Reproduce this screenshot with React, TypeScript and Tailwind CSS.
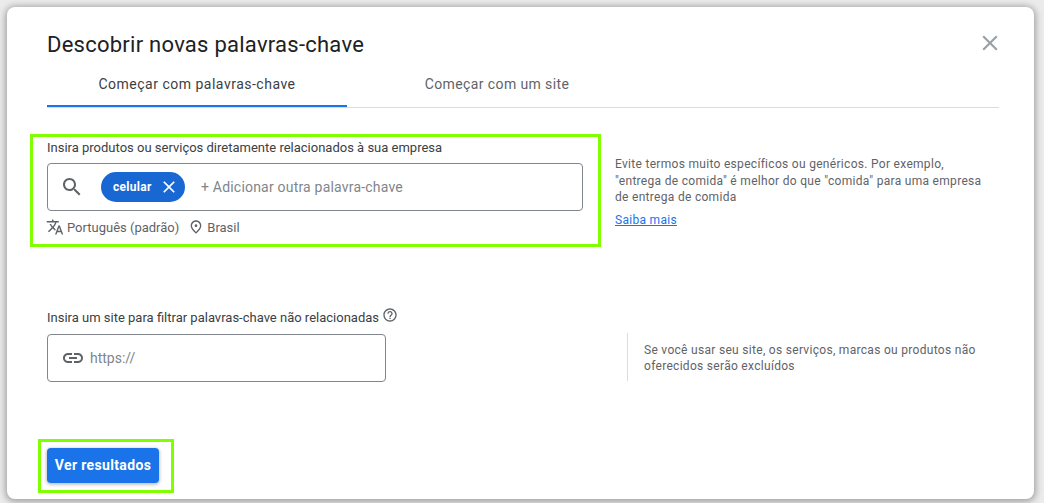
const sans = "font-['Roboto','Liberation_Sans',sans-serif]";

const paths = {
  search:
    "M15.5 14h-.79l-.28-.27C15.41 12.59 16 11.11 16 9.5 16 5.91 13.09 3 9.5 3S3 5.91 3 9.5 5.91 16 9.5 16c1.61 0 3.09-.59 4.23-1.57l.27.28v.79l5 4.99L20.49 19l-4.99-5zm-6 0C7.01 14 5 11.99 5 9.5S7.01 5 9.5 5 14 7.01 14 9.5 11.99 14 9.5 14z",
  close:
    "M19 6.41L17.59 5 12 10.59 6.41 5 5 6.41 10.59 12 5 17.59 6.41 19 12 13.41 17.59 19 19 17.59 13.41 12z",
  link: "M3.9 12c0-1.71 1.39-3.1 3.1-3.1h4V7H7c-2.76 0-5 2.24-5 5s2.24 5 5 5h4v-1.9H7c-1.71 0-3.1-1.39-3.1-3.1zM8 13h8v-2H8v2zm9-6h-4v1.9h4c1.71 0 3.1 1.39 3.1 3.1s-1.39 3.1-3.1 3.1h-4V17h4c2.76 0 5-2.24 5-5s-2.24-5-5-5z",
  translate:
    "M12.87 15.07l-2.54-2.51.03-.03c1.74-1.94 2.98-4.17 3.71-6.53H17V4h-7V2H8v2H1v1.99h11.17C11.5 7.92 10.44 9.75 9 11.35 8.07 10.32 7.3 9.19 6.69 8h-2c.73 1.63 1.73 3.17 2.98 4.56l-5.09 5.02L4 19l5-5 3.11 3.11.76-2.04zM18.5 10h-2L12 22h2l1.12-3h4.75L21 22h2l-4.5-12zm-2.62 7l1.62-4.33L19.12 17h-3.24z",
  place:
    "M12 12c-1.1 0-2-.9-2-2s.9-2 2-2 2 .9 2 2-.9 2-2 2zm6-1.8C18 6.57 15.35 4 12 4s-6 2.57-6 6.2c0 2.34 1.95 5.44 6 9.14 4.05-3.7 6-6.8 6-9.14zM12 2c4.2 0 8 3.22 8 8.2 0 3.32-2.67 7.25-8 11.8-5.33-4.55-8-8.48-8-11.8C4 5.22 7.8 2 12 2z",
  help: "M11 18h2v-2h-2v2zm1-16C6.48 2 2 6.48 2 12s4.48 10 10 10 10-4.48 10-10S17.52 2 12 2zm0 18c-4.41 0-8-3.59-8-8s3.59-8 8-8 8 3.59 8 8-3.59 8-8 8zm0-14c-2.21 0-4 1.79-4 4h2c0-1.1.9-2 2-2s2 .9 2 2c0 2-3 1.75-3 5h2c0-2.25 3-2.5 3-5 0-2.21-1.79-4-4-4z",
};

function Icon({ name, size, className }: { name: keyof typeof paths; size: number; className?: string }) {
  return (
    <svg width={size} height={size} viewBox="0 0 24 24" fill="currentColor" className={`shrink-0 ${className ?? ""}`}>
      <path d={paths[name]} />
    </svg>
  );
}

export default function App() {
  return (
    <div className={`${sans} h-[503px] w-[1044px] overflow-hidden bg-[#ebebeb] pl-[7px] pt-[7px]`}>
      <div className="relative h-[492px] w-[1027px] rounded-lg bg-white pl-[40px] pr-[35px] pt-[23px] shadow-[0_1px_6px_2px_rgba(0,0,0,0.3)]">
        <h1 className="text-[22px] leading-[30px] tracking-[0.25px] text-[#202124]">Descobrir novas palavras-chave</h1>
        <button className="absolute right-[31px] top-[23px] text-[#9aa0a6]">
          <Icon name="close" size={26} />
        </button>

        {/* Tabs */}
        <div className="mt-[4px] flex h-[44px] border-b border-[#dadce0]">
          <div className="flex w-[300px] items-center justify-center border-b-2 border-[#1a73e8] pb-[1px] text-[14px] font-[450] tracking-[0.5px] text-[#3c4043]">
            Começar com palavras-chave
          </div>
          <div className="flex w-[300px] items-center justify-center pb-[3px] text-[14px] font-[450] tracking-[0.4px] text-[#5f6368]">
            Começar com um site
          </div>
        </div>

        {/* Keywords */}
        <div className="mt-[26px] flex">
          <div className="-ml-[17px] h-[113px] w-[571px] border-[3px] border-[#7fff00] pl-[14px] pt-[3px]">
            <p className="text-[13px] leading-[16px] text-[#3c4043]">
              Insira produtos ou serviços diretamente relacionados à sua empresa
            </p>
            <div className="mt-[7px] flex h-[48px] w-[536px] items-center rounded border border-[#80868b] pl-[12px]">
              <Icon name="search" size={24} className="text-[#5f6368]" />
              <div className="ml-[17px] flex h-[30px] w-[84px] items-center rounded-full bg-[#1967d2] pl-[12px] text-white">
                <span className="text-[12px] font-bold tracking-[0.3px]">celular</span>
                <Icon name="close" size={20} className="ml-[7px]" />
              </div>
              <span className="ml-[16px] text-[14px] tracking-[0.2px] text-[#80868b]">+ Adicionar outra palavra-chave</span>
            </div>
            <div className="mt-[7px] flex items-center text-[13px] leading-[17px] text-[#5f6368]">
              <Icon name="translate" size={18} className="-ml-[1px]" />
              <span className="ml-[3px]">Português (padrão)</span>
              <Icon name="place" size={16} className="ml-[9px]" />
              <span className="ml-[3px]">Brasil</span>
            </div>
          </div>
          <div className="ml-[14px] w-[375px] pt-[22px] text-[12px] leading-[16.5px] tracking-[0.3px] text-[#5f6368]">
            <p className="w-[372px]">
              Evite termos muito específicos ou genéricos. Por exemplo,
              <br />
              "entrega de comida" é melhor do que "comida" para uma empresa de entrega de comida
            </p>
            <a className="mt-[6px] block text-[#1a73e8] underline">Saiba mais</a>
          </div>
        </div>

        {/* Site filter */}
        <div className="mt-[61px] flex items-start">
          <div className="w-[580px]">
            <div className="flex items-start text-[13px] leading-[16px] text-[#3c4043]">
              <span className="mt-[2px]">Insira um site para filtrar palavras-chave não relacionadas</span>
              <Icon name="help" size={16} className="ml-[3px] -mt-[1px] text-[#5f6368]" />
            </div>
            <div className="mt-[8px] flex h-[48px] w-[339px] items-center rounded border border-[#80868b] pl-[13px]">
              <Icon name="link" size={24} className="text-[#5f6368]" />
              <span className="ml-[5px] text-[14px] text-[#80868b]">https://</span>
            </div>
          </div>
          <div className="mt-[25px] h-[48px] border-l border-[#dadce0] pl-[16px] text-[12px] leading-[16px] tracking-[0.3px] text-[#5f6368]">
            <p className="mt-[9px] w-[350px]">
              Se você usar seu site, os serviços, marcas ou produtos não oferecidos serão excluídos
            </p>
          </div>
        </div>

        {/* Action */}
        <div className="-ml-[9px] mt-[57px] w-[136px] border-[3px] border-[#7fff00] pb-[7px] pl-[6px] pt-[6px]">
          <button className="h-[35px] w-[112px] rounded bg-[#1a73e8] text-[14px] font-bold tracking-[0.35px] text-white shadow-[0_1px_3px_1px_rgba(60,64,67,0.3)]">
            Ver resultados
          </button>
        </div>
      </div>
    </div>
  );
}
